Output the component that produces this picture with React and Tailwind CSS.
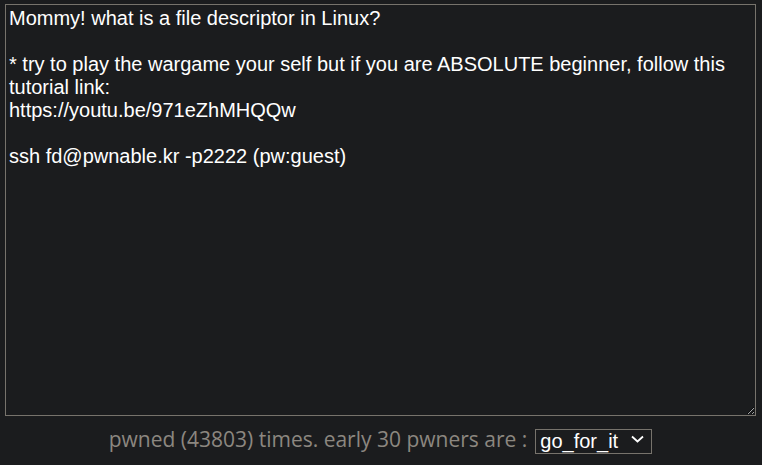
import React from "react";

const text = `Mommy! what is a file descriptor in Linux?

* try to play the wargame your self but if you are ABSOLUTE beginner, follow this tutorial link:
https://youtu.be/971eZhMHQQw

ssh fd@pwnable.kr -p2222 (pw:guest)`;

export default function App() {
  return (
    <div className="min-h-[465px] w-full bg-[#1b1c1e] flex flex-col">
      <textarea
        readOnly
        defaultValue={text}
        className="mt-[4px] ml-[5px] block w-[751px] h-[412px] border border-[#77736c] bg-[#1b1c1e] text-white px-[3px] py-[2px] text-[20px] leading-[23px] font-['Liberation_Sans',Arial,sans-serif] resize-y outline-none"
      />
      <div className="flex items-center justify-center gap-[8px] mt-[10px] ml-[5px] w-[751px] font-['Open_Sans',sans-serif] text-[21px] leading-[26px] text-[#8c8780]">
        <span>pwned (43803) times. early 30 pwners are :</span>
        {/* select box */}
        <div className="relative w-[117px] h-[25px]">
          <select className="appearance-none w-full h-full border border-[#77736c] bg-[#1b1c1e] text-white text-[20px] leading-[23px] pl-[4px] font-['Liberation_Sans',Arial,sans-serif] outline-none">
            <option>go_for_it</option>
          </select>
          <svg
            className="absolute right-[8px] top-[7px] pointer-events-none"
            width="13"
            height="10"
            viewBox="0 0 13 10"
            fill="none"
            stroke="white"
            strokeWidth="1.8"
          >
            <path d="M1 2.5 L6.5 7.5 L12 2.5" />
          </svg>
        </div>
      </div>
    </div>
  );
}
